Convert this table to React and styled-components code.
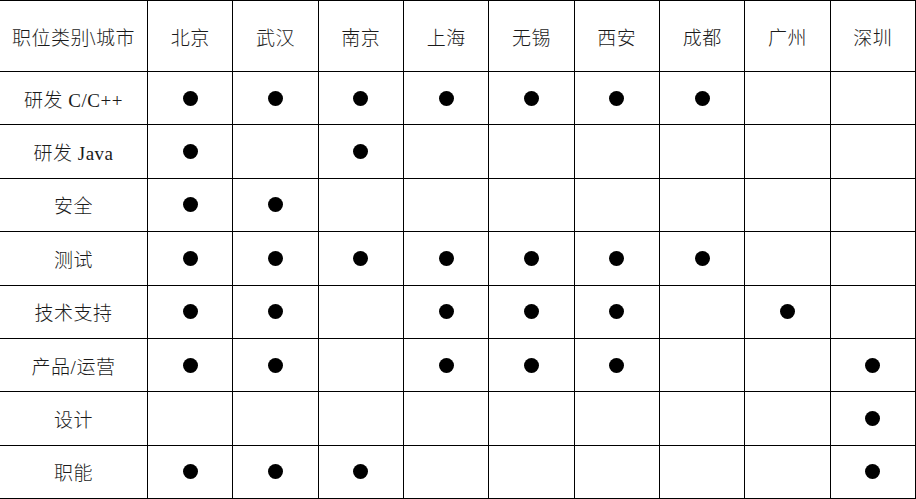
import React from 'react'
import styled, { createGlobalStyle } from 'styled-components'

const GlobalStyle = createGlobalStyle`
  html, body {
    margin: 0;
    padding: 0;
    background: #ffffff;
  }
  body {
    font-family: "Liberation Serif", "Noto Sans CJK SC", serif;
  }
`

const cities = ['北京', '武汉', '南京', '上海', '无锡', '西安', '成都', '广州', '深圳']

// 1 = office has the role, 0 = empty
const rows = [
  { name: '研发 C/C++', marks: [1, 1, 1, 1, 1, 1, 1, 0, 0] },
  { name: '研发 Java', marks: [1, 0, 1, 0, 0, 0, 0, 0, 0] },
  { name: '安全', marks: [1, 1, 0, 0, 0, 0, 0, 0, 0] },
  { name: '测试', marks: [1, 1, 1, 1, 1, 1, 1, 0, 0] },
  { name: '技术支持', marks: [1, 1, 0, 1, 1, 1, 0, 1, 0] },
  { name: '产品/运营', marks: [1, 1, 0, 1, 1, 1, 0, 0, 1] },
  { name: '设计', marks: [0, 0, 0, 0, 0, 0, 0, 0, 1] },
  { name: '职能', marks: [1, 1, 1, 0, 0, 0, 0, 0, 1] },
]

export default function App() {
  return (
    <>
      <GlobalStyle />
      <Grid>
        <Cell>职位类别\城市</Cell>
        {cities.map(city => <Cell key={city}>{city}</Cell>)}
        {rows.map(row => (
          <React.Fragment key={row.name}>
            <Cell>{row.name}</Cell>
            {row.marks.map((m, i) => (
              <Cell key={i}>{m ? <Dot /> : null}</Cell>
            ))}
          </React.Fragment>
        ))}
      </Grid>
    </>
  )
}

const Grid = styled.div`
  width: 916px;
  height: 499px;
  box-sizing: border-box;
  border-top: 1px solid #000;
  display: grid;
  grid-template-columns: 148px repeat(9, 1fr);
  grid-template-rows: 71px repeat(8, 1fr);
`

const Cell = styled.div`
  box-sizing: border-box;
  border-right: 1px solid #000;
  border-bottom: 1px solid #000;
  display: flex;
  align-items: center;
  justify-content: center;
  font-size: 19px;
  font-weight: 300;
  letter-spacing: 0.5px;
  color: #1a1a1a;
  white-space: nowrap;
`

const Dot = styled.span`
  width: 15px;
  height: 15px;
  border-radius: 50%;
  background: #000;
`
